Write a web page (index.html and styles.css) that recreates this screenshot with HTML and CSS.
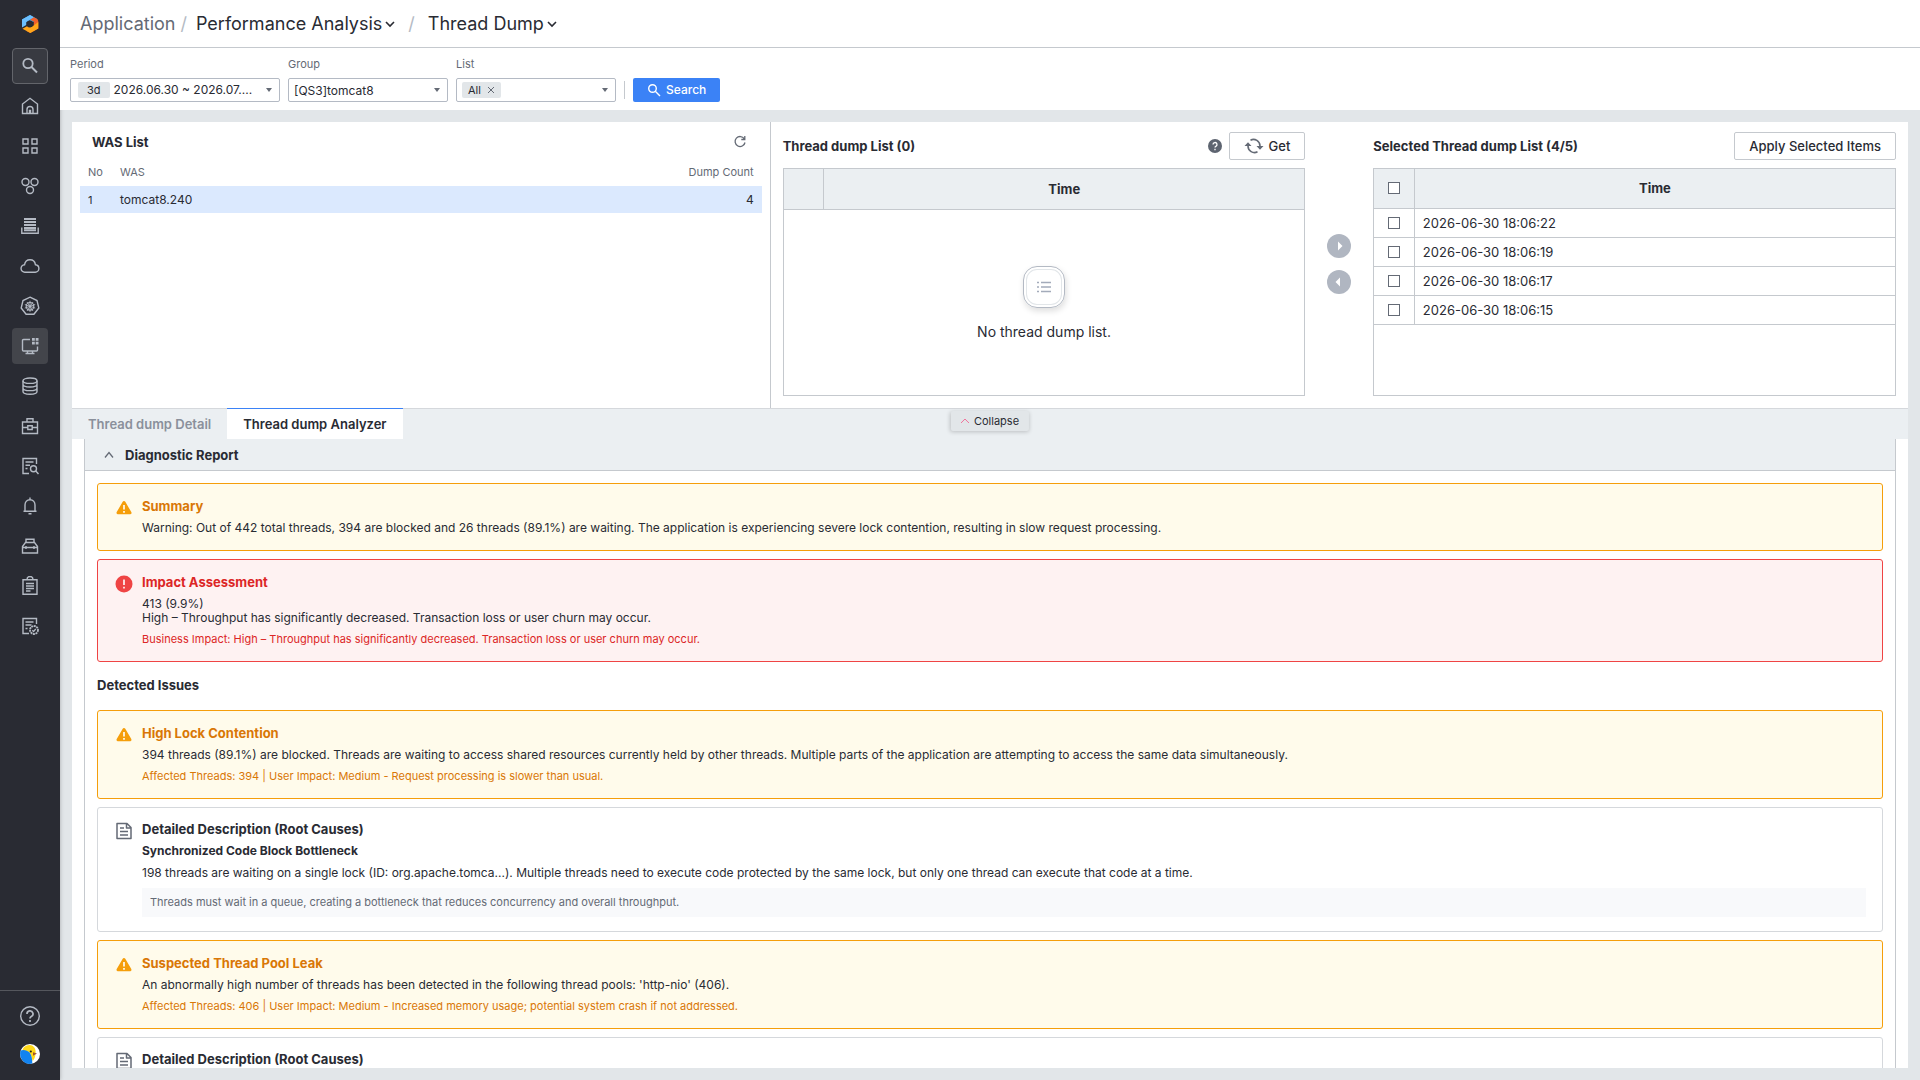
FILE: index.html
```html
<!DOCTYPE html>
<html lang="en">
<head>
  <meta charset="UTF-8">
  <title>Thread Dump</title>
  <link rel="stylesheet" href="styles.css">
</head>
<body>
  <aside class="sidebar">
    <a href="#" class="logo" aria-label="Home">
      <svg viewBox="0 0 20 20">
        <path d="M10 1L17.500 5.200L13 8A4 4 0 0 0 7 7.500L2 12V5.500z" fill="#3ba3f2"/>
        <path d="M10 1L2 5.500V13.500L6.200 11V8L14 3.300z" fill="#6cc0ff"/>
        <path d="M17.500 5.200L18.300 7V14.500L10.300 19L6.500 17L13.800 12V7.500L10 5.700L14 3.300z" fill="#f1602b"/>
        <path d="M18.300 8V14.500L10.300 19L2.500 14.700L7 12.300A4 4 0 0 0 13 12z" fill="#ffa61a"/>
        <circle cx="10" cy="10" r="3" fill="#292b33"/>
      </svg>
    </a>
    <button class="nav-btn search" aria-label="Search menu">
      <svg viewBox="0 0 20 20"><circle cx="8" cy="7.500" r="4.700" stroke-width="1.800"/><path d="M11.500 11l5.500 5.500" stroke-width="2"/></svg>
    </button>
    <nav class="nav">
      <a href="#" class="nav-btn" aria-label="Dashboard"><svg viewBox="0 0 20 20"><path d="M2.500 17.500V8L10 2.300 17.500 8v9.500z"/><path d="M7 17.500v-4a3 3 0 0 1 6 0v4M9.500 17.500v-3h1v3"/></svg></a>
      <a href="#" class="nav-btn" aria-label="Widgets"><svg viewBox="0 0 20 20"><path d="M3 3h5v5H3zM12 3h5v5h-5zM3 12h5v5H3zM12 12h5v5h-5z"/></svg></a>
      <a href="#" class="nav-btn" aria-label="Topology"><svg viewBox="0 0 20 20"><circle cx="5.500" cy="6" r="3.500"/><circle cx="14.500" cy="6" r="3.500"/><circle cx="10" cy="14" r="3.500"/></svg></a>
      <a href="#" class="nav-btn" aria-label="Servers"><svg viewBox="0 0 20 20"><path d="M1.800 11.500v5.800h16.400v-5.800"/><path d="M4 3h12M4 6h12M4 9h12M4 12h12M4 14.200h12" stroke-width="2"/></svg></a>
      <a href="#" class="nav-btn" aria-label="Cloud"><svg viewBox="0 0 20 20"><path d="M5 16.200a3.700 3.700 0 0 1-.5-7.400C5 5.800 7.200 3.800 10 3.800c2.900 0 5 2 5.400 4.900 2 .2 3.500 1.800 3.500 3.800s-1.600 3.700-3.700 3.700z"/></svg></a>
      <a href="#" class="nav-btn" aria-label="Kubernetes"><svg viewBox="0 0 20 20"><path d="M10 1.200l7 3.300 1.800 7.500-4.900 6.300H6.100L1.200 12 3 4.500z"/><circle cx="10" cy="10.300" r="3.800" stroke-width="1.200"/><path d="M10 4.800v11M4.800 8.500l10.400 3.600M15.200 8.500L4.800 12.100M7 15l6-9M13 15L7 6" stroke-width=".9"/></svg></a>
      <a href="#" class="nav-btn active" aria-label="Application"><svg viewBox="0 0 20 20"><path d="M10 3.500H3.500a1 1 0 0 0-1 1v9.500a1 1 0 0 0 1 1h13a1 1 0 0 0 1-1V10.500M7.500 15v2.500M12.500 15v2.500M5.500 17.500h9"/><path d="M12 2h2.800v2.800H12zM15.700 2h2.800v2.800h-2.800zM12 5.700h2.800v2.800H12zM15.700 5.700h2.800v2.800h-2.800z" class="solid"/></svg></a>
      <a href="#" class="nav-btn" aria-label="Database"><svg viewBox="0 0 20 20"><ellipse cx="10" cy="4.700" rx="7" ry="2.700"/><path d="M3 4.700v10.800c0 1.500 3.100 2.700 7 2.700s7-1.200 7-2.700V4.700M3 8.300c0 1.500 3.100 2.700 7 2.700s7-1.200 7-2.700M3 11.900c0 1.500 3.100 2.700 7 2.700s7-1.200 7-2.700"/></svg></a>
      <a href="#" class="nav-btn" aria-label="Business"><svg viewBox="0 0 20 20"><path d="M2.500 6h15v11.500h-15zM7 6V2.700h6V6M2.500 11.500h5M12.500 11.500h5M7.800 9.800h4.400v3.700H7.800z"/></svg></a>
      <a href="#" class="nav-btn" aria-label="Log search"><svg viewBox="0 0 20 20"><path d="M9 17.500H3v-15h13.500V8M5.500 6h8M5.500 9.200h4.500M5.500 12.500h2"/><circle cx="13.500" cy="12.700" r="3"/><path d="M15.800 15l2.700 3"/></svg></a>
      <a href="#" class="nav-btn" aria-label="Alerts"><svg viewBox="0 0 20 20"><path d="M3.500 15.200h13M5 15V9c0-3 2-5.200 5-5.200S15 6 15 9v6M10 1.500v2M8.500 17.700h3"/></svg></a>
      <a href="#" class="nav-btn" aria-label="Tools"><svg viewBox="0 0 20 20"><path d="M2.500 17v-6.500l3-4h9l3 4V17zM6 6.500V3.200h8v3.300M2.500 11.500h15M6 10v3M14 10v3"/></svg></a>
      <a href="#" class="nav-btn" aria-label="Reports"><svg viewBox="0 0 20 20"><path d="M3 3.700h14v14.500H3zM7 3.500a3 3 0 0 1 6 0M6 7.500h8M6 10h8M6 12.500h8M6 15h4.500"/></svg></a>
      <a href="#" class="nav-btn" aria-label="Audit"><svg viewBox="0 0 20 20"><path d="M9 17.500H3v-15h13.500V8M5.500 6h8M5.500 9h6M5.500 12.500h2"/><circle cx="14" cy="14" r="4" stroke-dasharray="2 .6" stroke-width="1.800"/><path d="M12.300 14.200l1.300 1.200 2.200-2.500"/></svg></a>
    </nav>
    <div class="sidebar-foot">
      <a href="#" aria-label="Help"><svg viewBox="0 0 20 20"><circle cx="10" cy="10" r="9.300"/><path d="M7 8a3 3 0 1 1 4.300 2.600c-.9.500-1.300.9-1.300 1.900M10 14v2" stroke-width="1.700"/></svg></a>
      <a href="#" aria-label="Profile">
        <svg viewBox="0 0 20 20">
          <circle cx="10" cy="10" r="10" fill="#fff" stroke="none"/>
          <path d="M3.500 3.800c2-2.300 6-3.800 9-2 2.800 1.700 3.500 4.700 3 8.200-.2 3-1.200 5-2.700 7-1.300-3-1.300-7-4.300-9.200-1.500-1-3.500-1-6.500-.8z" fill="#ffd91a" stroke="none"/>
          <path d="M.6 6.500C3 5.300 7.500 6 9.500 8.500c2 2.500 2.800 6 2.800 11C9 20.500 5.500 19.500 3 17 .2 14.200-.5 10 .6 6.500z" fill="#1283f0" stroke="none"/>
          <circle cx="10.800" cy="7.500" r="1.100" fill="#222" stroke="none"/>
          <path d="M13 8.300l4 1.200-4 2.300z" fill="#a3562c" stroke="none"/>
        </svg>
      </a>
    </div>
  </aside>

  <div class="page">
    <header class="breadcrumb">
      <span class="crumb-root">Application</span>
      <span class="slash">/</span>
      <button class="crumb">Performance Analysis <svg viewBox="0 0 10 10"><path d="M1 3l4 4 4-4"/></svg></button>
      <span class="slash wide">/</span>
      <button class="crumb">Thread Dump <svg viewBox="0 0 10 10"><path d="M1 3l4 4 4-4"/></svg></button>
    </header>

    <form class="filters">
      <div class="field period">
        <label for="period">Period</label>
        <button type="button" class="combo" id="period"><span class="tag">3d</span><span class="value">2026.06.30 ~ 2026.07....</span><span class="arrow"></span></button>
      </div>
      <div class="field">
        <label for="group">Group</label>
        <div class="select-wrap">
          <select class="combo" id="group"><option>[QS3]tomcat8</option></select>
          <span class="arrow"></span>
        </div>
      </div>
      <div class="field">
        <label for="list">List</label>
        <button type="button" class="combo" id="list"><span class="tag">All <svg viewBox="0 0 8 8"><path d="M1 1l6 6M7 1L1 7"/></svg></span><span class="arrow"></span></button>
      </div>
      <span class="divider"></span>
      <button type="button" class="search-btn"><svg viewBox="0 0 14 14"><circle cx="5.500" cy="5.500" r="3.800"/><path d="M8.300 8.300L13 13"/></svg>Search</button>
    </form>

    <main class="content">
      <section class="top">
        <div class="was">
          <div class="was-head">
            <h2>WAS List</h2>
            <button class="icon-btn" aria-label="Refresh"><svg viewBox="0 0 14 14"><path d="M11.300 3.800A5 5 0 1 0 12 7.500M11.800 1v3.500H8.300"/></svg></button>
          </div>
          <table class="was-table">
            <thead><tr><th class="no">No</th><th>WAS</th><th class="num">Dump Count</th></tr></thead>
            <tbody><tr><td class="no">1</td><td>tomcat8.240</td><td class="num">4</td></tr></tbody>
          </table>
        </div>

        <div class="dumps">
          <div class="dump-col">
            <div class="dump-head">
              <h2>Thread dump List (0)</h2>
              <div class="actions">
                <button class="icon-btn" aria-label="Help"><svg class="help" viewBox="0 0 14 14"><circle cx="7" cy="7" r="7"/><path d="M5 5.500a2 2 0 1 1 2.900 1.800c-.6.300-.9.600-.9 1.200M7 9.800v1.400"/></svg></button>
                <button class="btn"><svg viewBox="0 0 20 20"><path d="M6.500 4.200A6.500 6.500 0 0 1 16 10v1M13.500 15.800A6.500 6.500 0 0 1 4 10V9"/><path d="M12.500 10h7L16 13.700zM.5 10h7L4 6.300z" class="solid"/></svg>Get</button>
              </div>
            </div>
            <div class="grid">
              <table class="empty-table">
                <thead><tr><th class="check"></th><th>Time</th></tr></thead>
              </table>
              <div class="empty">
                <div class="empty-icon"><svg viewBox="0 0 16 16"><path d="M5 3.500h10M5 8h10M5 12.500h10M1 3.500h2M1 8h2M1 12.500h2"/></svg></div>
                <p>No thread dump list.</p>
              </div>
            </div>
          </div>

          <div class="movers">
            <button aria-label="Add"><svg viewBox="0 0 24 24"><circle cx="12" cy="12" r="12"/><path d="M11 7.500l4.500 4.500-4.500 4.500z"/></svg></button>
            <button aria-label="Remove"><svg viewBox="0 0 24 24"><circle cx="12" cy="12" r="12"/><path d="M13 7.500L8.500 12l4.500 4.500z"/></svg></button>
          </div>

          <div class="dump-col">
            <div class="dump-head">
              <h2>Selected Thread dump List (4/5)</h2>
              <button class="btn">Apply Selected Items</button>
            </div>
            <div class="grid">
              <table>
                <thead><tr><th class="check"><input type="checkbox" aria-label="Select all"></th><th>Time</th></tr></thead>
                <tbody>
                  <tr><td class="check"><input type="checkbox" id="d1"></td><td><label for="d1">2026-06-30 18:06:22</label></td></tr>
                  <tr><td class="check"><input type="checkbox" id="d2"></td><td><label for="d2">2026-06-30 18:06:19</label></td></tr>
                  <tr><td class="check"><input type="checkbox" id="d3"></td><td><label for="d3">2026-06-30 18:06:17</label></td></tr>
                  <tr><td class="check"><input type="checkbox" id="d4"></td><td><label for="d4">2026-06-30 18:06:15</label></td></tr>
                </tbody>
              </table>
            </div>
          </div>
        </div>
      </section>

      <div class="tabs">
        <button class="tab">Thread dump Detail</button>
        <button class="tab active">Thread dump Analyzer</button>
        <button class="collapse"><svg viewBox="0 0 8 8"><path d="M0 6l4-4 4 4"/></svg>Collapse</button>
      </div>

      <section class="analyzer">
        <div class="report">
          <button class="report-head"><svg viewBox="0 0 10 10"><path d="M1 7.500l4-5 4 5"/></svg>Diagnostic Report</button>
          <div class="cards">
            <article class="card warn">
              <svg class="card-icon" viewBox="0 0 20 20"><path d="M10 4.500l6 10.300H4z" stroke-width="3"/><path class="mark" d="M10 7v4.500M10 13v1.700"/></svg>
              <div class="card-body">
                <h3>Summary</h3>
                <p>Warning: Out of 442 total threads, 394 are blocked and 26 threads (89.1%) are waiting. The application is experiencing severe lock contention, resulting in slow request processing.</p>
              </div>
            </article>
            <article class="card error">
              <svg class="card-icon" viewBox="0 0 20 20"><circle cx="10" cy="10" r="8.500"/><path class="mark" d="M10 5.500v5.500M10 12.700v1.700"/></svg>
              <div class="card-body">
                <h3>Impact Assessment</h3>
                <p>413 (9.9%)<br>High – Throughput has significantly decreased. Transaction loss or user churn may occur.</p>
                <p class="note">Business Impact: High – Throughput has significantly decreased. Transaction loss or user churn may occur.</p>
              </div>
            </article>
            <h3 class="issues-title">Detected Issues</h3>
            <article class="card warn">
              <svg class="card-icon" viewBox="0 0 20 20"><path d="M10 4.500l6 10.300H4z" stroke-width="3"/><path class="mark" d="M10 7v4.500M10 13v1.700"/></svg>
              <div class="card-body">
                <h3>High Lock Contention</h3>
                <p>394 threads (89.1%) are blocked. Threads are waiting to access shared resources currently held by other threads. Multiple parts of the application are attempting to access the same data simultaneously.</p>
                <p class="note">Affected Threads: 394 | User Impact: Medium - Request processing is slower than usual.</p>
              </div>
            </article>
            <article class="card detail">
              <svg class="card-icon" viewBox="0 0 20 20"><path d="M3 2.500h10l4 4v11H3zM12.500 2.500v4.500H17M6 7h4M6 10.500h8M6 14h8"/></svg>
              <div class="card-body">
                <h3>Detailed Description (Root Causes)</h3>
                <h4>Synchronized Code Block Bottleneck</h4>
                <p>198 threads are waiting on a single lock (ID: org.apache.tomca...). Multiple threads need to execute code protected by the same lock, but only one thread can execute that code at a time.</p>
                <p class="hint">Threads must wait in a queue, creating a bottleneck that reduces concurrency and overall throughput.</p>
              </div>
            </article>
            <article class="card warn">
              <svg class="card-icon" viewBox="0 0 20 20"><path d="M10 4.500l6 10.300H4z" stroke-width="3"/><path class="mark" d="M10 7v4.500M10 13v1.700"/></svg>
              <div class="card-body">
                <h3>Suspected Thread Pool Leak</h3>
                <p>An abnormally high number of threads has been detected in the following thread pools: 'http-nio' (406).</p>
                <p class="note">Affected Threads: 406 | User Impact: Medium - Increased memory usage; potential system crash if not addressed.</p>
              </div>
            </article>
            <article class="card detail">
              <svg class="card-icon" viewBox="0 0 20 20"><path d="M3 2.500h10l4 4v11H3zM12.500 2.500v4.500H17M6 7h4M6 10.500h8M6 14h8"/></svg>
              <div class="card-body">
                <h3>Detailed Description (Root Causes)</h3>
              </div>
            </article>
          </div>
        </div>
      </section>
    </main>
  </div>
</body>
</html>
```
FILE: styles.css
```css
:root {
  --text: #292b33;
  --muted: #646a75;
  --line: #c5c9ce;
  --head-bg: #ebeff2;
  --page-bg: #e2e6e9;
  --blue: #3b82f6;
}
* { box-sizing: border-box; }
body {
  margin: 0;
  height: 100vh;
  display: flex;
  overflow: hidden;
  font-family: Inter, "Noto Sans", sans-serif;
  font-size: 12px;
  line-height: 14px;
  color: var(--text);
  background: var(--page-bg);
}
h2, h3, h4, p { margin: 0; }
h2, h3 { font-size: 13px; font-weight: 700; line-height: 13px; }
button {
  font: inherit;
  color: inherit;
  background: none;
  border: none;
  padding: 0;
  cursor: pointer;
}
svg { display: block; flex: none; }

/* Sidebar */
.sidebar {
  width: 60px;
  flex: none;
  display: flex;
  flex-direction: column;
  align-items: center;
  background: var(--text);
  box-shadow: 0 0 4px #0004;
}
.sidebar svg {
  width: 20px;
  height: 20px;
  fill: none;
  stroke: #b4bac4;
  stroke-width: 1.4;
}
.logo { padding: 14px 0; }
.logo svg { stroke: none; }
.nav {
  display: flex;
  flex-direction: column;
  gap: 4px;
  margin-top: 4px;
}
.nav-btn {
  width: 36px;
  height: 36px;
  display: flex;
  align-items: center;
  justify-content: center;
  border-radius: 4px;
}
.nav-btn.search { background: #383a41; border: 1px solid #63656b; }
.nav-btn.active { background: #43454b; }
.sidebar .solid { fill: #b4bac4; stroke: none; }
.sidebar-foot {
  margin-top: auto;
  width: 100%;
  display: flex;
  flex-direction: column;
  align-items: center;
  gap: 18px;
  padding: 15px 0 16px;
  border-top: 1px solid #55575d;
}

.page {
  flex: 1;
  min-width: 0;
  display: flex;
  flex-direction: column;
}

/* Breadcrumb */
.breadcrumb {
  height: 48px;
  flex: none;
  display: flex;
  align-items: center;
  gap: 5px;
  padding: 0 20px;
  font-size: 18px;
  line-height: 24px;
  background: #fff;
  border-bottom: 1px solid var(--line);
}
.crumb-root { color: var(--muted); }
.slash { color: #b4bac4; margin-right: 4px; }
.slash.wide { margin: 0 8px; }
.crumb { display: flex; align-items: center; gap: 3px; }
.crumb svg {
  width: 10px;
  height: 10px;
  fill: none;
  stroke: var(--text);
  stroke-width: 1.6;
}

/* Filters */
.filters {
  height: 62px;
  flex: none;
  display: flex;
  align-items: flex-end;
  gap: 8px;
  padding: 0 10px 8px;
  background: #fff;
}
.field {
  width: 160px;
  display: flex;
  flex-direction: column;
  gap: 7px;
  color: var(--muted);
  font-size: 11px;
}
.field.period { width: 210px; }
.combo {
  width: 100%;
  height: 24px;
  display: flex;
  align-items: center;
  gap: 4px;
  padding: 0 7px 0 5px;
  border: 1px solid #b4bac4;
  border-radius: 2px;
  background: #fff;
  color: var(--text);
  font-family: inherit;
  font-size: 12px;
}
.period .combo { padding-left: 7px; }
select.combo { appearance: none; }
.select-wrap {
  display: grid;
  align-items: center;
}
.select-wrap > * { grid-area: 1 / 1; }
.select-wrap .arrow { margin-right: 8px; justify-self: end; pointer-events: none; }
.arrow {
  margin-left: auto;
  border: 3px solid transparent;
  border-top: 4px solid var(--muted);
  border-bottom: none;
}
.tag {
  height: 16px;
  display: flex;
  align-items: center;
  gap: 6px;
  padding: 0 9px;
  border-radius: 2px;
  background: var(--page-bg);
  font-size: 11px;
}
#list .tag { padding: 0 6px; }
.tag svg {
  width: 8px;
  height: 8px;
  stroke: var(--muted);
}
.divider {
  width: 1px;
  height: 18px;
  margin-bottom: 3px;
  background: var(--line);
}
.search-btn {
  height: 24px;
  display: flex;
  align-items: center;
  gap: 5px;
  padding: 0 14px;
  border-radius: 2px;
  background: var(--blue);
  color: #fff;
  font-weight: 500;
}
.search-btn svg {
  width: 14px;
  height: 14px;
  fill: none;
  stroke: #fff;
  stroke-width: 1.4;
}

/* Content */
.content {
  flex: 1;
  min-height: 0;
  margin: 12px;
  display: flex;
  flex-direction: column;
  background: #fff;
}
.top {
  height: 286px;
  flex: none;
  display: flex;
}
.was {
  width: calc(38% + 1px);
  flex: none;
  padding: 13px 8px;
  border-right: 1px solid var(--line);
}
.was-head {
  display: flex;
  align-items: center;
  justify-content: space-between;
  padding: 0 15px 0 12px;
}
.icon-btn svg {
  width: 14px;
  height: 14px;
  fill: none;
  stroke: var(--muted);
  stroke-width: 1.3;
}
.icon-btn .help circle { fill: #5d6470; stroke: none; }
.icon-btn .help path { stroke: #fff; }

table {
  width: 100%;
  border-collapse: collapse;
}
.was-table { margin-top: 8px; }
.was-table th, .was-table td {
  height: 27px;
  padding: 0 8px;
  text-align: left;
}
.was-table th {
  height: 29px;
  font-weight: 400;
  font-size: 11px;
  color: var(--muted);
}
.was-table .no { width: 32px; font-size: 11px; }
.was-table .num { text-align: right; }
.was-table td { background: #dbe9fe; }

.dumps {
  flex: 1;
  display: flex;
  padding: 10px 12px 12px;
}
.dump-col {
  flex: 1;
  min-width: 0;
  display: flex;
  flex-direction: column;
  gap: 8px;
}
.dump-head {
  height: 28px;
  display: flex;
  align-items: center;
  justify-content: space-between;
}
.actions { display: flex; align-items: center; gap: 7px; }
.btn {
  height: 28px;
  display: flex;
  align-items: center;
  gap: 5px;
  padding: 0 14px;
  border: 1px solid var(--line);
  border-radius: 2px;
  font-size: 13px;
  font-weight: 500;
}
.btn svg {
  width: 20px;
  height: 20px;
  fill: none;
  stroke: var(--muted);
  stroke-width: 1.6;
}
.btn .solid { fill: var(--muted); stroke: none; }
.grid {
  flex: 1;
  display: flex;
  flex-direction: column;
  border: 1px solid var(--line);
}
.grid th {
  height: 39px;
  padding: 0;
  background: var(--head-bg);
  border-bottom: 1px solid var(--line);
  font-size: 13px;
}
.grid .empty-table th { height: 40px; }
.grid td {
  height: 29px;
  padding: 0 8px;
  border-bottom: 1px solid var(--line);
  font-size: 13px;
}
.grid .check {
  width: 40px;
  padding: 0;
  border-right: 1px solid var(--line);
}
.grid input {
  appearance: none;
  display: block;
  width: 12px;
  height: 12px;
  margin: 0 auto;
  border: 1px solid var(--muted);
  background: #fff;
}
.empty {
  flex: 1;
  display: flex;
  flex-direction: column;
  align-items: center;
  justify-content: center;
  gap: 17px;
  font-size: 14px;
}
.empty-icon {
  width: 42px;
  height: 42px;
  display: flex;
  align-items: center;
  justify-content: center;
  border: 1px solid #b4bac4;
  border-radius: 14px;
  box-shadow: inset 0 0 0 2px #fff, inset 0 0 0 3px var(--page-bg), 1px 3px 6px #0002;
}
.empty-icon svg {
  width: 16px;
  height: 16px;
  stroke: #a3abba;
  stroke-width: 1.3;
}
.movers {
  width: 68px;
  flex: none;
  display: flex;
  flex-direction: column;
  align-items: center;
  justify-content: center;
  gap: 12px;
}
.movers svg { width: 24px; height: 24px; fill: #b0b6c1; }
.movers path { fill: #fff; }

/* Tabs */
.tabs {
  position: relative;
  height: 31px;
  flex: none;
  display: flex;
  background: var(--head-bg);
  border-top: 1px solid #d5d8dc;
}
.tab {
  margin-top: -1px;
  padding: 0 16px;
  border-top: 1px solid transparent;
  font-size: 13px;
  font-weight: 600;
  color: #8a909b;
}
.tab.active {
  background: #fff;
  border-top-color: var(--blue);
  color: var(--text);
}
.collapse {
  position: absolute;
  top: 2px;
  left: 50%;
  transform: translateX(-50%);
  height: 20px;
  display: flex;
  align-items: center;
  gap: 5px;
  padding: 0 10px;
  border-radius: 2px;
  background: var(--page-bg);
  box-shadow: 0 1px 4px #0003;
  font-size: 11px;
}
.collapse svg { width: 8px; height: 8px; fill: none; stroke: #f0719b; }

/* Analyzer */
.analyzer {
  flex: 1;
  min-height: 0;
  overflow: hidden;
  padding: 0 12px;
}
.report {
  border: 1px solid var(--line);
  border-top: none;
}
.report-head {
  width: 100%;
  height: 32px;
  display: flex;
  align-items: center;
  gap: 11px;
  padding: 0 19px;
  background: var(--head-bg);
  border-bottom: 1px solid var(--line);
  font-size: 13px;
  font-weight: 700;
}
.report-head svg { width: 10px; height: 10px; fill: none; stroke: var(--muted); stroke-width: 1.3; }
.cards {
  display: flex;
  flex-direction: column;
  gap: 8px;
  padding: 12px;
}
.card {
  display: flex;
  gap: 8px;
  padding: 16px 16px 15px;
  border: 1px solid;
  border-radius: 3px;
}
.card-icon {
  width: 20px;
  height: 20px;
  margin: -2px 0;
  stroke-linejoin: round;
}
.card-body {
  flex: 1;
  min-width: 0;
  display: flex;
  flex-direction: column;
  gap: 8px;
}
.note { font-size: 11px; line-height: 13px; }
.warn { background: #fffbeb; border-color: #f59e0b; }
.warn .card-icon { fill: #f59e0b; stroke: #f59e0b; }
.card-icon .mark { stroke: #fff; stroke-width: 1.6; }
.warn h3, .warn .note { color: #d97706; }
.error { background: #fef2f2; border-color: #ef4444; }
.error .card-icon { fill: #ef4444; }
.error h3, .error .note { color: #dc2626; }
.detail { padding: 15px 16px 14px; border-color: #d5d8dc; }
.detail .card-icon { fill: none; stroke: var(--muted); stroke-width: 1.5; }
.detail h4 { font-size: 12px; font-weight: 700; line-height: 14px; }
.hint {
  padding: 8px;
  background: #f8f9fb;
  color: var(--muted);
  font-size: 11px;
  line-height: 13px;
}
.issues-title { padding: 9px 0 10px; }
```
